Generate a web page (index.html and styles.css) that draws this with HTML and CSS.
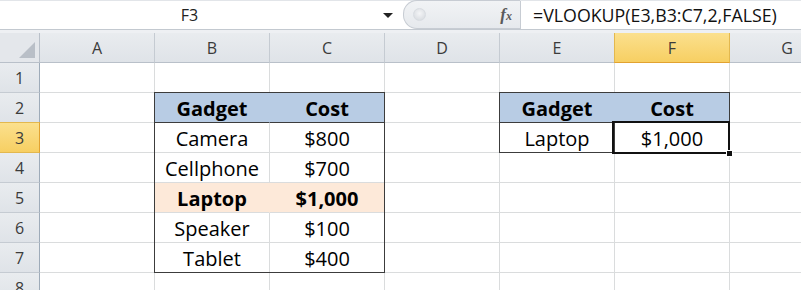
FILE: index.html
```html
<!DOCTYPE html>
<html lang="en">
<head>
    <meta charset="UTF-8">
    <title>VLOOKUP</title>
    <link rel="stylesheet" href="styles.css">
</head>
<body>
    <div class="formula-bar">
        <div class="name-box">
            <span class="name">F3</span>
            <span class="arrow"></span>
        </div>
        <div class="fx-area">
            <span class="knob"></span>
            <span class="fx">f<small>x</small></span>
        </div>
        <div class="formula">=VLOOKUP(E3,B3:C7,2,FALSE)</div>
    </div>
    <div class="gap"></div>

    <div class="sheet">
        <!-- column headers -->
        <div class="corner"><span class="tri"></span></div>
        <div class="col-head">A</div>
        <div class="col-head">B</div>
        <div class="col-head">C</div>
        <div class="col-head">D</div>
        <div class="col-head">E</div>
        <div class="col-head active">F</div>
        <div class="col-head">G</div>

        <!-- row 1 -->
        <div class="row-head">1</div>
        <div class="cell"></div><div class="cell"></div><div class="cell"></div><div class="cell"></div>
        <div class="cell"></div><div class="cell"></div><div class="cell"></div>

        <!-- row 2 -->
        <div class="row-head">2</div>
        <div class="cell"></div><div class="cell"></div><div class="cell"></div>

        <!-- row 3 -->
        <div class="row-head active">3</div>
        <div class="cell"></div><div class="cell"></div><div class="cell"></div>

        <!-- rows 4 to 7 -->
        <div class="row-head">4</div>
        <div class="cell"></div><div class="cell"></div><div class="cell"></div><div class="cell"></div><div class="cell"></div>
        <div class="row-head">5</div>
        <div class="cell"></div><div class="cell"></div><div class="cell"></div><div class="cell"></div><div class="cell"></div>
        <div class="row-head">6</div>
        <div class="cell"></div><div class="cell"></div><div class="cell"></div><div class="cell"></div><div class="cell"></div>
        <div class="row-head">7</div>
        <div class="cell"></div><div class="cell"></div><div class="cell"></div><div class="cell"></div><div class="cell"></div>

        <!-- row 8 -->
        <div class="row-head">8</div>
        <div class="cell"></div><div class="cell"></div><div class="cell"></div><div class="cell"></div>
        <div class="cell"></div><div class="cell"></div><div class="cell"></div>

        <!-- lookup table B2:C7 -->
        <div class="block table-main">
            <div class="t head">Gadget</div><div class="t head last">Cost</div>
            <div class="t">Camera</div><div class="t last">$800</div>
            <div class="t">Cellphone</div><div class="t last">$700</div>
            <div class="t hit">Laptop</div><div class="t hit last">$1,000</div>
            <div class="t">Speaker</div><div class="t last">$100</div>
            <div class="t bottom">Tablet</div><div class="t bottom last">$400</div>
        </div>

        <!-- result E2:F3 -->
        <div class="block table-result">
            <div class="t head">Gadget</div><div class="t head last">Cost</div>
            <div class="t bottom">Laptop</div>
            <div class="t bottom last selected">$1,000<span class="selection"><span class="handle"></span></span></div>
        </div>
    </div>
</body>
</html>
```

FILE: styles.css
```css
body {
    margin: 0;
    width: 801px;
    height: 290px;
    overflow: hidden;
    background: #fff;
    font-family: "Open Sans", "Liberation Sans", sans-serif;
    color: #000;
}

/* formula bar */
.formula-bar {
    display: flex;
    border-top: 1px solid #e2e5e9;
    border-bottom: 1px solid #c3c9d0;
    box-sizing: border-box;
    height: 30px;
}
.name-box {
    width: 403px;
    display: flex;
    align-items: center;
    background: #fff;
}
.name {
    flex: 1;
    text-align: center;
    font-size: 16px;
    color: #222;
    padding-right: 4px;
}
.arrow {
    width: 0;
    height: 0;
    border-left: 5px solid transparent;
    border-right: 5px solid transparent;
    border-top: 5px solid #222;
    margin-right: 10px;
}
.fx-area {
    width: 117px;
    display: flex;
    align-items: center;
    justify-content: space-between;
    background: linear-gradient(#f1f3f5, #e6e9ed);
    border: 1px solid #c7ccd3;
    border-right: none;
    border-radius: 14px 0 0 14px;
    box-sizing: border-box;
    padding: 0 8px 0 9px;
    margin-top: -1px;
}
.knob {
    width: 11px;
    height: 11px;
    border-radius: 50%;
    background: radial-gradient(circle at 50% 40%, #f4f5f7, #d3d7dc);
    border: 1px solid #d8dce1;
}
.fx {
    font-family: "Liberation Serif", serif;
    font-style: italic;
    font-weight: bold;
    font-size: 17px;
    color: #5a5a5a;
}
.fx small {
    font-size: 12px;
}
.formula {
    flex: 1;
    background: #fff;
    border-left: 1px solid #c7ccd3;
    font-size: 17.8px;
    padding-left: 12px;
    display: flex;
    align-items: center;
    color: #111;
}
.gap {
    height: 3px;
    background: #eef0f3;
}

/* grid */
.sheet {
    display: grid;
    grid-template-columns: 40px repeat(7, 115px);
    grid-template-rows: repeat(9, 30px);
    height: 257px;
    overflow: hidden;
}
.sheet > div {
    box-sizing: border-box;
}
.corner {
    background: #e4e7eb;
    border-right: 1px solid #b9c0c9;
    border-bottom: 1px solid #b9c0c9;
    position: relative;
}
.tri {
    position: absolute;
    right: 4px;
    bottom: 4px;
    width: 0;
    height: 0;
    border-left: 16px solid transparent;
    border-bottom: 16px solid #b9bfc7;
}
.col-head, .row-head {
    background: linear-gradient(#e9ecef, #dfe3e8);
    display: flex;
    align-items: center;
    justify-content: center;
    font-size: 16px;
    color: #3b3b3b;
    border-right: 1px solid #c5cbd2;
    border-bottom: 1px solid #b9c0c9;
    padding-top: 1px;
}
.row-head {
    border-right: 1px solid #9eabb9;
    border-bottom: 1px solid #c5cbd2;
}
.col-head.active {
    background: linear-gradient(#fbe08e, #f7cf62);
    border-left: 1px solid #e3b84e;
    border-right: 1px solid #e3b84e;
    border-bottom: 1px solid #e2a230;
    margin-left: -1px;
}
.row-head.active {
    background: linear-gradient(#fbe08e, #f7cf62);
    border-top: 1px solid #e3b84e;
    border-bottom: 1px solid #e3b84e;
    border-right: 1px solid #e2a230;
    margin-top: -1px;
}
.cell {
    border-right: 1px solid #dadcdd;
    border-bottom: 1px solid #dadcdd;
}

/* tables on the sheet */
.block {
    display: grid;
    grid-template-columns: 115px 114px;
    border: 1px solid #3c3c3c;
    margin: -1px 0 0 -1px;
    background: #fff;
}
.table-main {
    grid-column: 3 / 5;
    grid-row: 3 / 9;
    grid-template-rows: repeat(5, 30px) 29px;
}
.table-result {
    grid-column: 6 / 8;
    grid-row: 3 / 5;
    grid-template-rows: 30px 29px;
}
.t {
    display: flex;
    align-items: center;
    justify-content: center;
    font-size: 20px;
    padding-top: 1px;
    border-right: 1px solid #dadcdd;
    border-bottom: 1px solid #dadcdd;
    box-sizing: border-box;
}
.t.last {
    border-right: none;
}
.t.bottom {
    border-bottom: none;
}
.t.head {
    background: #b8cce4;
    font-weight: bold;
    border-right-color: #b8cce4;
    border-bottom: 1px solid #3c3c3c;
}
.t.hit {
    background: #fde9d9;
    font-weight: bold;
    border-right-color: #fde9d9;
}
.table-result .t.bottom {
    border-right-color: #3c3c3c;
}
.selected {
    position: relative;
}
.selection {
    position: absolute;
    left: -3px;
    top: -2px;
    right: -1px;
    bottom: -2px;
    border: 2px solid #111;
}
.handle {
    position: absolute;
    right: -5px;
    bottom: -5px;
    width: 5px;
    height: 5px;
    background: #111;
    border: 1px solid #fff;
}
```
